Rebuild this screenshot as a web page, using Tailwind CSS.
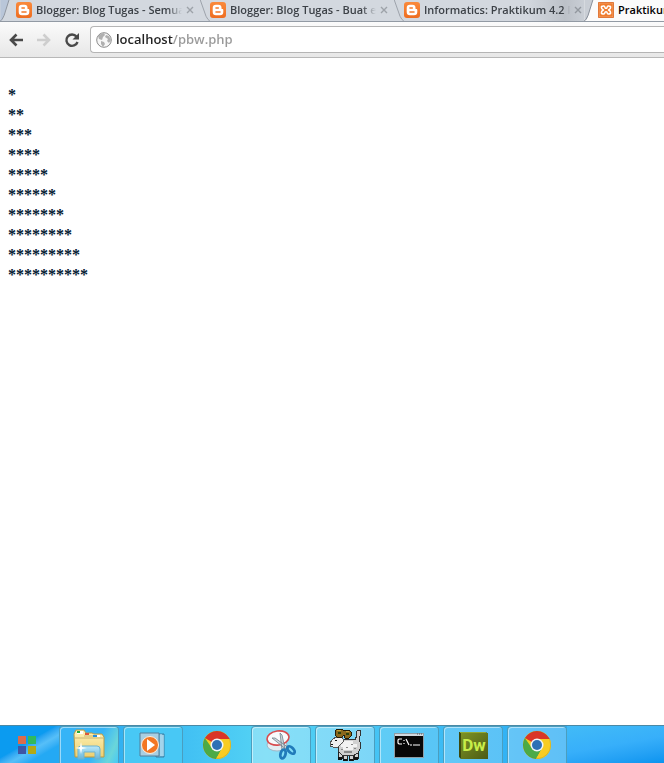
<!DOCTYPE html>
<html lang="en">
<head>
  <meta charset="UTF-8" />
  <meta name="viewport" content="width=device-width, initial-scale=1.0" />
  <title>Praktikum</title>
  <script src="https://cdn.jsdelivr.net/npm/@tailwindcss/browser@4"></script>
</head>
<body class="flex h-screen flex-col overflow-hidden bg-white font-['Open_Sans',sans-serif]">
  <!-- Shared icons -->
  <svg class="absolute size-0" aria-hidden="true">
    <defs>
      <linearGradient id="orange" x2="0" y2="1"><stop stop-color="#fa8a3c" /><stop offset="1" stop-color="#ee6d20" /></linearGradient>
      <linearGradient id="folder" x2="0" y2="1"><stop stop-color="#fff3b8" /><stop offset="1" stop-color="#edcf70" /></linearGradient>
      <linearGradient id="dw" x2="1" y2="1"><stop stop-color="#7d9225" /><stop offset="1" stop-color="#4c5b13" /></linearGradient>
      <linearGradient id="glass" x2="0" y2="1"><stop stop-color="#b9e8fa" /><stop offset="1" stop-color="#68b5da" /></linearGradient>
    </defs>
    <symbol id="blogger" viewBox="0 0 16 16">
      <rect width="16" height="16" rx="3" fill="url(#orange)" />
      <path d="M6 2.7h2.5a3 3 0 0 1 3 3v.7q0 .7.8.7h.3q.7 0 .7.8V10a3.3 3.3 0 0 1-3.3 3.3H6A3.3 3.3 0 0 1 2.7 10V6A3.3 3.3 0 0 1 6 2.7z" fill="#fff" />
      <path d="M6 6h2.3M6 10h4" stroke="#f27a2c" stroke-width="1.6" stroke-linecap="round" />
    </symbol>
    <symbol id="chrome" viewBox="0 0 30 30">
      <circle cx="15" cy="15" r="14" fill="#f8cc22" />
      <path d="M15 15 2.9 8A14 14 0 0 1 27.1 8l.5 1H15z" fill="#da3528" />
      <path d="M2.9 8A14 14 0 0 0 14 29l6.2-11L15 15l-5.200 3z" fill="#4bab46" />
      <path d="M15 9h12.6A14 14 0 0 1 14 29l6.2-11z" fill="#f8cc22" />
      <circle cx="15" cy="15" r="6.5" fill="#f1f5f7" />
      <circle cx="15" cy="15" r="5" fill="#2e70b5" />
      <circle cx="15" cy="15" r="13.7" fill="none" stroke="#6d6b31" stroke-opacity=".35" stroke-width=".6" />
    </symbol>
  </svg>

  <header class="shrink-0">
    <!-- Tabs -->
    <nav class="flex h-[22px] overflow-hidden border-b border-[#929aa4] bg-[#d3d8df] text-[11px] font-semibold text-[#3c4147]">
      <div class="relative flex w-[200px] shrink-0 items-center pb-px pl-4">
        <svg class="absolute inset-y-0 left-0 h-full w-4" viewBox="0 0 16 22" fill="none"><path d="M0 0h9L3 18q-1 3-3 4z" fill="#b9c6d9" /><path d="M9 0 4 16q-2 5-4 6" stroke="#8c939d" /></svg>
        <svg class="mr-1 size-4 shrink-0"><use href="#blogger" /></svg>
        <a href="#" class="w-[146px] overflow-hidden whitespace-nowrap mask-r-from-90%">Blogger: Blog Tugas - Semua</a>
        <button aria-label="Close tab" class="ml-1"><svg class="size-2" viewBox="0 0 8 8" stroke="#9da2a9" stroke-width="1.4"><path d="m1 1 6 6M7 1 1 7" /></svg></button>
      </div>
      <div class="relative flex w-[194px] shrink-0 items-center pb-px pl-[10px]">
        <svg class="absolute inset-y-0 left-0 h-full w-3" viewBox="0 0 12 22" fill="none" stroke="#9aa0a8"><path d="m0 0 6 17q2 4 4 5" /></svg>
        <svg class="mr-1 size-4 shrink-0"><use href="#blogger" /></svg>
        <a href="#" class="w-[146px] overflow-hidden whitespace-nowrap mask-r-from-90%">Blogger: Blog Tugas - Buat e</a>
        <button aria-label="Close tab" class="ml-1"><svg class="size-2" viewBox="0 0 8 8" stroke="#9da2a9" stroke-width="1.4"><path d="m1 1 6 6M7 1 1 7" /></svg></button>
      </div>
      <div class="relative flex w-[190px] shrink-0 items-center bg-linear-to-r from-transparent from-70% via-[#bcc1c8] via-90% to-[#c9ced5] pb-px pl-[10px]">
        <svg class="absolute inset-y-0 left-0 h-full w-3" viewBox="0 0 12 22" fill="none" stroke="#9aa0a8"><path d="m0 0 6 17q2 4 4 5" /></svg>
        <svg class="mr-1 size-4 shrink-0"><use href="#blogger" /></svg>
        <a href="#" class="w-[146px] overflow-hidden whitespace-nowrap mask-r-from-95%">Informatics: Praktikum 4.2 Pe</a>
        <button aria-label="Close tab" class="ml-1"><svg class="size-2" viewBox="0 0 8 8" stroke="#92979e" stroke-width="1.4"><path d="m1 1 6 6M7 1 1 7" /></svg></button>
      </div>
      <div class="relative flex min-w-0 grow items-center bg-[#fbfbfb] pb-px pl-[14px] text-black">
        <svg class="absolute inset-y-0 left-0 h-full w-3" viewBox="0 0 12 22" fill="none"><path d="M0 0h9L4 17q-1 4-4 5z" fill="#c9ced5" /><path d="M9 0 4 16q-2 5-4 6" stroke="#858d97" /></svg>
        <svg class="mr-1 size-4 shrink-0" viewBox="0 0 16 16" fill="none">
          <rect width="16" height="16" rx="1" fill="#d9601a" /><rect x="1" y="1" width="14" height="14" fill="#f07c2e" stroke="#f6b488" stroke-width=".6" />
          <path d="M5.5 8Q3 7 3.5 4.5q3-1.5 3.500 1.200Q8 7 9 5.700q.5-2.700 3.500-1.200Q13 7 10.500 8 13 9 12.500 11.500q-3 1.500-3.500-1.200Q8 9 7 10.300q-.5 2.700-3.500 1.200Q3 9 5.500 8z" stroke="#fff" stroke-width="1.5" stroke-linejoin="round" />
        </svg>
        <a href="#" class="whitespace-nowrap">Praktikum</a>
      </div>
    </nav>
    <!-- Toolbar -->
    <div class="flex h-9 items-center border-b border-[#b8b8b8] bg-linear-to-b from-[#fbfbfb] to-[#e7e7e7] pl-2">
      <button aria-label="Back" class="mr-3"><svg class="size-4" viewBox="0 0 16 16" fill="none" stroke="#494949" stroke-width="2.6"><path d="M15 8H3M8.5 2.5 3 8l5.500 5.500" /></svg></button>
      <button aria-label="Forward" class="mr-3" disabled><svg class="size-4" viewBox="0 0 16 16" fill="none" stroke="#cecece" stroke-width="2.6"><path d="M1 8h12M7.5 2.5 13 8l-5.500 5.500" /></svg></button>
      <button aria-label="Reload" class="mr-[10px]"><svg class="size-4" viewBox="0 0 16 16" fill="none"><path d="M12.5 4.5A5.7 5.7 0 1 0 13.500 10" stroke="#494949" stroke-width="2.4" /><path d="M15 1v6.5H8.500z" fill="#494949" /></svg></button>
      <div class="flex h-[27px] min-w-0 grow items-center gap-1 rounded-l border border-r-0 border-[#b5b5b5] bg-white pl-[5px]">
        <svg class="size-4 shrink-0" viewBox="0 0 16 16"><circle cx="8" cy="8" r="7.3" fill="#f6f6f6" stroke="#8b8b8b" /><path d="M2 4q3-3 6-3l1 2-2 2-1 3-3-1zM5 9l3 1 1 2-2 3-2-3zM10 3l3 1 2 4-2 3-2-2 1-2-3-2z" fill="#b0b0b0" /></svg>
        <!-- host dark, path grey -->
        <input type="text" aria-label="Address" value="localhost/pbw.php" class="w-full min-w-0 bg-linear-to-r from-[#222] from-[57px] to-[#999] to-[57px] bg-clip-text text-[13px] font-semibold text-transparent outline-none" />
      </div>
    </div>
  </header>

  <main class="grow px-2 pt-[27px] font-['Liberation_Serif',serif] text-base leading-5 font-bold text-[#031b33]">
    <p>*</p>
    <p>**</p>
    <p>***</p>
    <p>****</p>
    <p>*****</p>
    <p>******</p>
    <p>*******</p>
    <p>********</p>
    <p>*********</p>
    <p>**********</p>
  </main>

  <!-- Taskbar -->
  <footer class="flex h-[38px] shrink-0 overflow-hidden border-t border-[#4b89a5] bg-linear-to-r from-[#0d94ef] via-[#54d3f4] via-40% to-[#199df4]">
    <button aria-label="Start" class="flex w-[59px] shrink-0 items-center justify-center bg-linear-150 from-[#0b9bf0] from-45% via-[#56bff8] via-60% to-[#24a9f4] to-75%">
      <svg class="ml-[-5px] size-5" viewBox="0 0 20 20"><path fill="#d96c4c" d="M1 1h8v8H1z" /><path fill="#31b95d" d="M11 1h8v8h-8z" /><path fill="#3e55a5" d="M1 11h8v8H1z" /><path fill="#b3a914" d="M11 11h8v8h-8z" /></svg>
    </button>
    <div class="flex gap-1">
      <button aria-label="Explorer" class="flex w-[60px] items-center justify-center rounded-t-sm border border-b-0 border-[#4a9ebf] bg-linear-115 from-[#36b4f7] from-60% via-[#6ad6da] via-85% to-[#45c9f5] shadow-[inset_1px_1px_#ffffff80]">
        <svg class="size-8" viewBox="0 0 32 32"><path d="M1 5 3 1h8l2 3h6l2 1h8l2 3v20H2z" fill="url(#folder)" stroke="#b69a47" /><path d="M4 2h6v3H4z" fill="#fff" /><path d="M4 2h3v2H4z" fill="#22aa38" /><path d="M2 9h29M11 7h11" stroke="#c9b470" /><path d="M12 4h4v2h-4z" fill="#dd593b" /><path d="M20 6h7v2h-7z" fill="#fff" /><path d="M20 6h4v2h-4z" fill="#258ee0" /><path d="M5 30V20q0-3 3-3h16q3 0 3 3v10h-5v-7H11v7z" fill="url(#glass)" stroke="#6fb3cf" /><path d="m8 13 1 5 5 1-5 1-1 5-1-5-5-1 5-1z" fill="#fff" /></svg>
      </button>
      <button aria-label="Media Player" class="flex w-[60px] items-center justify-center rounded-t-sm border border-b-0 border-[#4a9ebf] bg-[#48c8f5] shadow-[inset_1px_1px_#ffffff80]">
        <svg class="h-[26px] w-7" viewBox="0 0 28 26"><path d="M17 2h8v23h-8z" fill="#74b9db" stroke="#397fa4" /><path d="M22 2v22M24 3v21" stroke="#d1effb" /><path d="M1 1h19v23H1z" fill="#a9cfe2" stroke="#527f98" /><circle cx="11" cy="13" r="8.5" fill="#f37622" stroke="#fff0df" /><path d="m8 7 8 6-8 6z" fill="#fff" /></svg>
      </button>
      <button aria-label="Chrome" class="flex w-[60px] items-center justify-center"><svg class="size-[30px]"><use href="#chrome" /></svg></button>
      <button aria-label="Snipping Tool" class="flex w-[60px] items-center justify-center rounded-t-sm border border-b-0 border-[#4a9ebf] bg-white/30 shadow-[inset_1px_1px_#ffffff80]">
        <svg class="h-[32px] w-[30px]" viewBox="0 0 30 32" fill="none">
          <ellipse cx="11" cy="16" rx="10" ry="6" fill="#e3edf2" stroke="#a0b7c7" />
          <ellipse cx="12" cy="9" rx="11" ry="7" fill="#f8fafc" stroke="#d74c4f" stroke-width="1.6" transform="rotate(-8 12 9)" />
          <path d="m14 4 2 2 3 14-3 1zM6 9h3l14 10-2 2z" fill="#cfd8dd" stroke="#71828d" stroke-width=".8" />
          <ellipse cx="17" cy="25" rx="2.5" ry="4.5" transform="rotate(15 17 25)" stroke="#217bba" stroke-width="2.8" />
          <ellipse cx="25" cy="21" rx="2.5" ry="4.5" transform="rotate(-45 25 21)" stroke="#217bba" stroke-width="2.8" />
        </svg>
      </button>
      <button aria-label="Sheep" class="flex w-[60px] items-center justify-center rounded-t-sm border border-b-0 border-[#4a9ebf] bg-white/30 shadow-[inset_1px_1px_#ffffff80]">
        <svg class="size-8" viewBox="0 0 32 32" shape-rendering="crispEdges">
          <path d="M9 21h4v8H9zM14 22h4v9h-4zM20 22h4v9h-4zM25 20h4v9h-4z" fill="#d0d0d0" stroke="#222" />
          <path d="M9 12h3v-2h14V8h1V3l2-2h2v6l-1 3 1 3v7l-2 4-4 2H13l-3-3z" fill="#d0d0d0" stroke="#333" />
          <path d="M14 12h10v3h4v3h-4v3H14v-3h-2v-3h2z" fill="#f2f2f2" />
          <path d="m1 14 3-4 3-2h6l2 4-3 3-3 3H4l-3-1z" fill="#f0f0f0" stroke="#555" />
          <path d="M6 11h2v1H6zM2 15h2v1H2z" fill="#111" />
          <path d="M17 18h2v1h-2zM22 15h2v1h-2zM12 20h2v1h-2zM25 19h2v1h-2zM15 22h8v2h-8z" fill="#888" />
          <path d="m6 2 2-2h5l2 2 1-1h4l2 2v4l-2 2h-4l-1-3-2 2H8L6 6z" fill="#8a681c" stroke="#211b0a" />
          <path d="M9 3h3v2H9zM17 4h3v2h-3z" fill="#29420e" /><path d="M8 1h4v1H8zM17 2h3v1h-3z" fill="#c4a23a" />
          <path d="M9 29h4M14 31h4M20 31h4M25 29h4" stroke="#111" stroke-width="3" />
        </svg>
      </button>
      <button aria-label="Command Prompt" class="flex w-[60px] items-center justify-center rounded-t-sm border border-b-0 border-[#4a9ebf] bg-white/15 shadow-[inset_1px_1px_#ffffff80]">
        <svg class="h-[25px] w-[30px]" viewBox="0 0 30 25"><path d="M0 0h30v25H0z" fill="#909da5" /><path d="M1 3h28v21H1z" fill="#080808" /><path d="M1 1h28v2H1z" fill="#d2d9df" /><path d="M23 1h5" stroke="#4e5962" stroke-dasharray="1 1" /><path d="M8 6H5L4 7v3l1 1h3M10 7v1M10 10v1M12 6l3 6M16 12h2M19 12h7" fill="none" stroke="#fff" stroke-width="1.2" /></svg>
      </button>
      <button aria-label="Dreamweaver" class="flex w-[60px] items-center justify-center rounded-t-sm border border-b-0 border-[#4a9ebf] bg-white/20 shadow-[inset_1px_1px_#ffffff80]">
        <svg class="h-[29px] w-[31px]" viewBox="0 0 31 29"><path d="M1 1h27l2 2v25H3l-2-2z" fill="#3c490d" /><path d="M3 2h27v26H3z" fill="url(#dw)" /><path d="M2 1h26v1H2z" fill="#93a830" /><text x="16" y="20" text-anchor="middle" font-family="Roboto, sans-serif" font-weight="700" font-size="17" fill="#c7ed49">Dw</text></svg>
      </button>
      <button aria-label="Chrome window" class="flex w-[60px] items-center justify-center rounded-t-sm border border-b-0 border-[#4a9ebf] bg-white/25 shadow-[inset_1px_1px_#ffffff80]"><svg class="size-[30px]"><use href="#chrome" /></svg></button>
    </div>
    <div class="grow bg-linear-170 from-[#42bbf7] via-[#37affa] to-[#0894ef]"></div>
  </footer>
</body>
</html>
